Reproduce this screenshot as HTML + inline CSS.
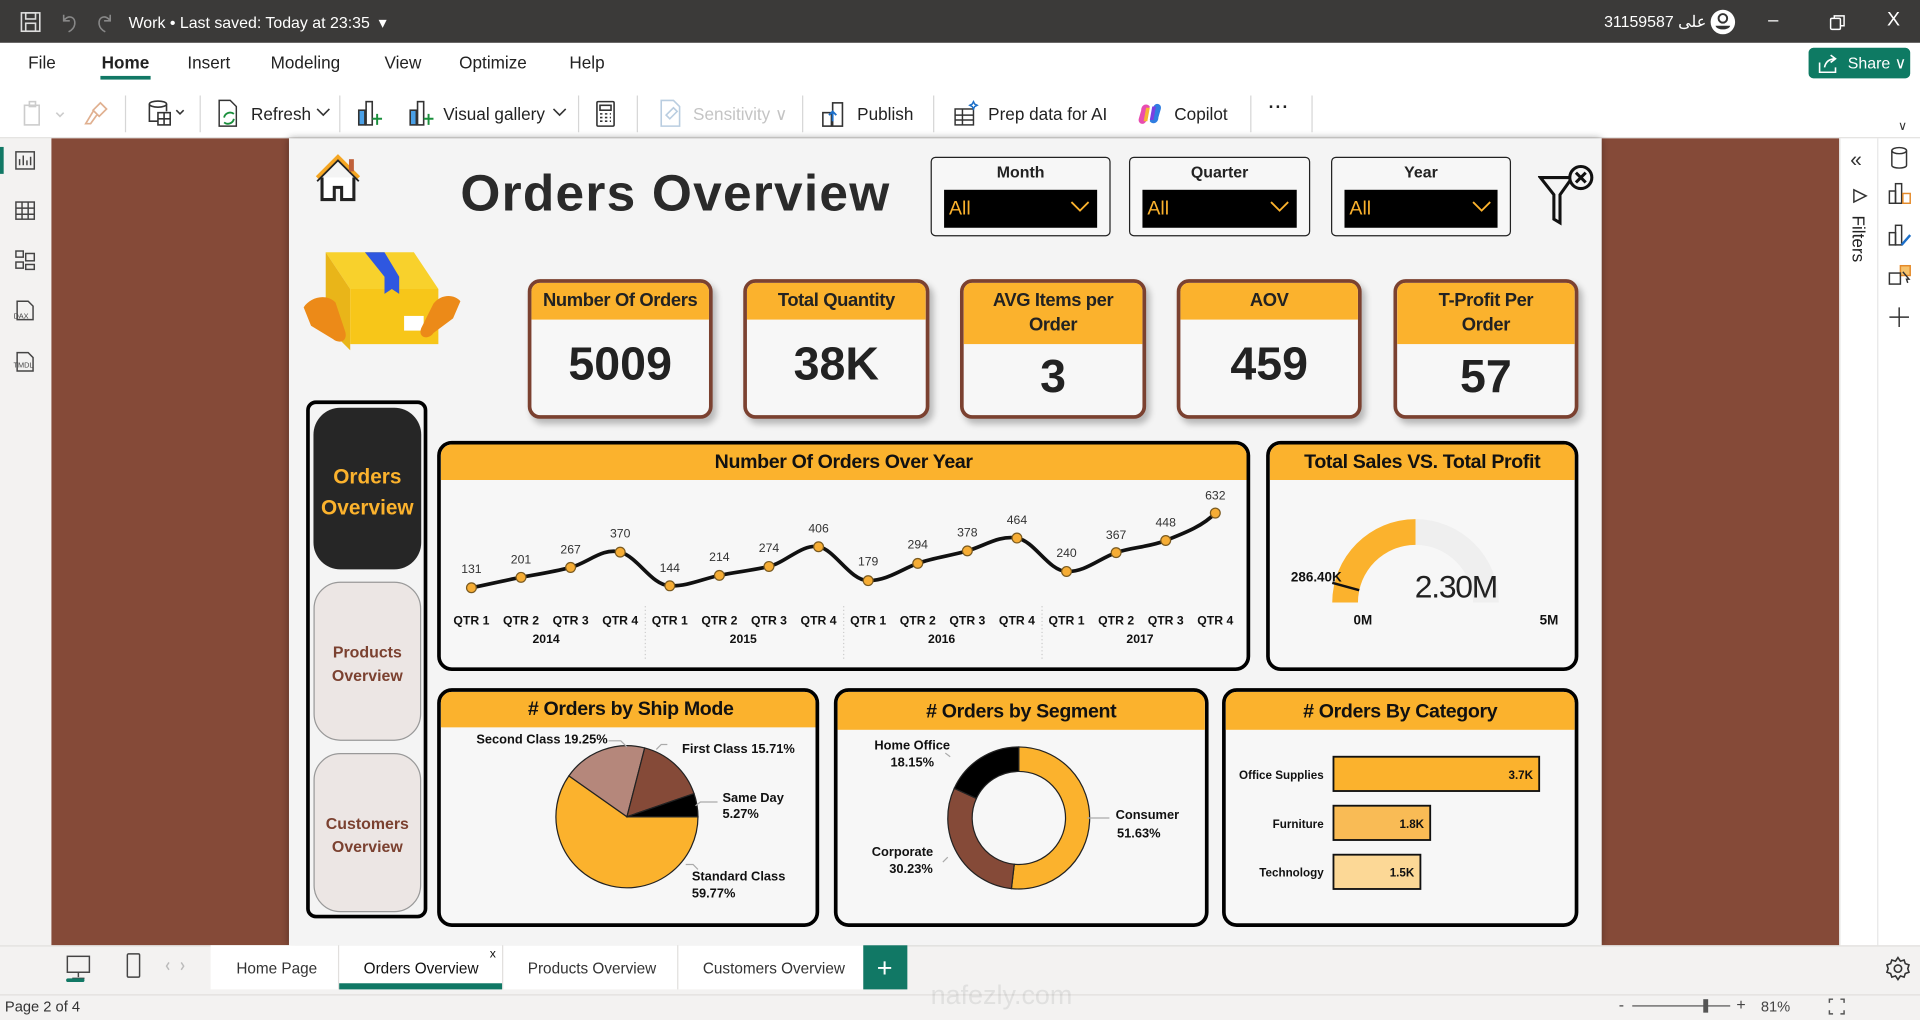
<!DOCTYPE html>
<html><head><meta charset="utf-8"><style>
*{margin:0;padding:0;box-sizing:border-box}
html,body{width:1920px;height:1020px;overflow:hidden;background:#fff}
#w{position:absolute;left:0;top:0;width:1568px;height:833px;transform:scale(1.2244898);transform-origin:0 0;font-family:"Liberation Sans",sans-serif;background:#f3f2f1}
.a{position:absolute}
.t{position:absolute;white-space:nowrap}
.n{font-family:"Liberation Sans",sans-serif;font-weight:bold}
.kpi{position:absolute;border:3px solid #7b4130;border-radius:10px;background:#f7f7f7;overflow:hidden;box-shadow:3px 4px 5px rgba(0,0,0,.25)}
.kh{background:#fbb22d;color:#222;text-align:center;font-weight:bold;font-size:15px;line-height:20px;padding:5px 0;white-space:nowrap;letter-spacing:-0.3px}
.kv{text-align:center;font-weight:bold;font-size:38px;color:#222}
.card{position:absolute;border:3px solid #000;border-radius:12px;background:#f7f7f7;overflow:hidden}
.ch{background:#fbb22d;height:29px;text-align:center;font-weight:bold;font-size:16px;line-height:29px;color:#111;letter-spacing:-0.3px}
.sl{position:absolute;border:1.5px solid #222;border-radius:4px;background:#f7f7f7}
.sl .lb{text-align:center;font-size:13px;color:#222;margin-top:4px;font-weight:bold}
.sl .dd{position:absolute;left:10px;right:10px;top:26px;height:31px;background:#000;color:#fbb22d;font-size:16px;padding:7px 0 0 4px}
.tab{position:absolute;font-size:14px;color:#222;top:51px;transform:translateY(-50%)}
.sep{position:absolute;top:78px;width:1px;height:30px;background:#d6d6d6}
.tb{position:absolute;top:85px;font-size:14px;color:#222}
</style></head><body><div id="w">
<div class="a" style="left:0;top:0;width:1568px;height:35px;background:#3b3a39"></div>
<svg class="a" style="left:16px;top:9px" width="18" height="18" viewBox="0 0 18 18" fill="none" stroke="#ddd" stroke-width="1.3"><rect x="1.5" y="1.5" width="15" height="15"/><rect x="5" y="1.5" width="8" height="5"/><rect x="5" y="10" width="8" height="6.5"/></svg>
<svg class="a" style="left:48px;top:9px" width="16" height="18" fill="none" stroke="#888" stroke-width="1.3"><path d="M4 3v5h5M4 8c3-5 10-4 9 3-0.5 3-3 5-5 6"/></svg>
<svg class="a" style="left:78px;top:9px" width="16" height="18" fill="none" stroke="#888" stroke-width="1.3"><path d="M12 3v5H7M12 8C9 3 2 4 3 11c0.5 3 3 5 5 6"/></svg>
<div class="t" style="left:105px;top:11px;color:#fff;font-size:13px">Work • Last saved: Today at 23:35 &nbsp;▾</div>
<div class="t" style="left:1310px;top:10px;color:#fff;font-size:13px;font-family:'Liberation Sans','Noto Sans CJK SC',sans-serif">31159587 على</div>
<svg class="a" style="left:1396px;top:7px" width="22" height="22"><circle cx="11" cy="11" r="10" fill="#fff"/><circle cx="11" cy="8" r="3.5" fill="none" stroke="#333" stroke-width="1.6"/><path d="M5 14h12c-1 4-11 4-12 0z" fill="#333"/></svg>
<div class="t" style="left:1444px;top:8px;color:#fff;font-size:15px">–</div>
<svg class="a" style="left:1494px;top:12px" width="13" height="13" fill="none" stroke="#fff" stroke-width="1.2"><rect x="1" y="3" width="8" height="9" rx="1"/><path d="M4 3V1h8v8h-3"/></svg>
<div class="t" style="left:1541px;top:8px;color:#fff;font-size:16px">X</div>
<div class="a" style="left:0;top:35px;width:1568px;height:78px;background:#fff"></div>
<div class="tab" style="left:23px">File</div>
<div class="tab" style="left:83px;font-weight:bold">Home</div>
<div class="a" style="left:82px;top:62px;width:41px;height:3px;background:#117865"></div>
<div class="tab" style="left:153px">Insert</div>
<div class="tab" style="left:221px">Modeling</div>
<div class="tab" style="left:314px">View</div>
<div class="tab" style="left:375px">Optimize</div>
<div class="tab" style="left:465px">Help</div>
<div class="a" style="left:1477px;top:39px;width:83px;height:25px;background:#0e7a63;border-radius:4px;color:#fff;font-size:13px;padding:5px 0 0 32px">Share ∨</div>
<svg class="a" style="left:1484px;top:43px" width="18" height="17" fill="none" stroke="#fff" stroke-width="1.3"><path d="M2 8v8h13v-4M6 12c1-5 4-7 9-7M11 2l4 3-4 3"/></svg>
<svg class="a" style="left:18px;top:82px" width="40" height="22" fill="none" stroke="#ccc" stroke-width="1.3"><rect x="2" y="4" width="12" height="16"/><rect x="6" y="1" width="5" height="4"/><path d="M28 10l3 3 3-3"/></svg>
<svg class="a" style="left:68px;top:82px" width="22" height="22" fill="none" stroke="#e0b090" stroke-width="1.4"><path d="M14 2l5 5-6 6-5-5zM8 9l-6 10h4l5-7"/></svg>
<div class="sep" style="left:102px"></div>
<svg class="a" style="left:120px;top:81px" width="36" height="24" fill="none" stroke="#333" stroke-width="1.3"><ellipse cx="9" cy="4" rx="7" ry="2.5"/><path d="M2 4v14h7M16 4v6"/><rect x="9" y="11" width="10" height="10"/><path d="M9 16h10M14 11v10M24 9l3 3 3-3"/></svg>
<div class="sep" style="left:163px"></div>
<svg class="a" style="left:177px;top:81px" width="20" height="24" fill="none" stroke="#333" stroke-width="1.2"><path d="M2 1h9l5 5v16H2z"/><path d="M6 15a5 5 0 0 1 8-3M14 16a5 5 0 0 1-8 3" stroke="#1a8f3c" stroke-width="1.5"/></svg>
<div class="tb" style="left:205px">Refresh</div>
<svg class="a" style="left:258px;top:88px" width="12" height="8" fill="none" stroke="#333" stroke-width="1.3"><path d="M1 1l5 5 5-5"/></svg>
<div class="sep" style="left:277px"></div>
<svg class="a" style="left:291px;top:81px" width="22" height="24" fill="none" stroke="#333" stroke-width="1.3"><rect x="2" y="9" width="5" height="12" fill="#4aa0e6"/><rect x="8" y="2" width="5" height="19"/><path d="M13 16h8M17 12v9" stroke="#1a8f3c" stroke-width="1.6"/></svg>
<svg class="a" style="left:333px;top:81px" width="22" height="24" fill="none" stroke="#333" stroke-width="1.3"><rect x="2" y="9" width="5" height="12" fill="#4aa0e6"/><rect x="8" y="2" width="5" height="19"/><path d="M13 16h8M17 12v9" stroke="#1a8f3c" stroke-width="1.6"/></svg>
<div class="tb" style="left:362px">Visual gallery</div>
<svg class="a" style="left:451px;top:88px" width="12" height="8" fill="none" stroke="#333" stroke-width="1.3"><path d="M1 1l5 5 5-5"/></svg>
<div class="sep" style="left:472px"></div>
<svg class="a" style="left:486px;top:82px" width="17" height="22" fill="none" stroke="#333" stroke-width="1.3"><rect x="1.5" y="1" width="14" height="20" rx="1"/><rect x="4" y="4" width="9" height="4"/><path d="M4 11h2M8 11h2M12 11h1M4 14h2M8 14h2M12 14h1M4 17h2M8 17h2M12 17h1"/></svg>
<div class="sep" style="left:520px"></div>
<svg class="a" style="left:538px;top:81px" width="20" height="24" fill="none" stroke="#b9cde0" stroke-width="1.3"><path d="M2 1h10l5 5v16H2z"/><path d="M6 13l6-6 3 3-6 6z"/></svg>
<div class="tb" style="left:566px;color:#c4c4c4">Sensitivity ∨</div>
<div class="sep" style="left:655px"></div>
<svg class="a" style="left:670px;top:81px" width="22" height="24" fill="none" stroke="#333" stroke-width="1.3"><rect x="2" y="11" width="7" height="11"/><rect x="10" y="3" width="8" height="19"/><path d="M10 18V10M7 13l3-3 3 3" stroke="#1c6fc9" stroke-width="1.5"/></svg>
<div class="tb" style="left:700px">Publish</div>
<div class="sep" style="left:762px"></div>
<svg class="a" style="left:778px;top:81px" width="22" height="24" fill="none" stroke="#333" stroke-width="1.2"><rect x="2" y="8" width="15" height="13"/><path d="M2 13h15M2 17h15M8 8v13"/><path d="M17 2l1 2 2 1-2 1-1 2-1-2-2-1 2-1z" stroke="#1c6fc9"/></svg>
<div class="tb" style="left:807px">Prep data for AI</div>
<svg class="a" style="left:928px;top:82px" width="22" height="22"><path d="M4 8c0-5 5-6 7-3l-3 12c-2 4-7 2-6-2z" fill="#e84cb0"/><path d="M18 14c0 5-5 6-7 3l3-12c2-4 7-2 6 2z" fill="#2f7de1"/><path d="M8 6l3 0-2 11-3 0z" fill="#f6b533"/><path d="M14 16l-3 0 2-11 3 0z" fill="#7b3fe0"/></svg>
<div class="tb" style="left:959px">Copilot</div>
<div class="sep" style="left:1021px"></div>
<div class="tb" style="left:1036px;top:79px;font-weight:bold;letter-spacing:1px">···</div>
<div class="sep" style="left:1071px"></div>
<div class="t" style="left:1550px;top:98px;font-size:10px;color:#333">∨</div>
<div class="a" style="left:0;top:112px;width:1568px;height:1px;background:#e1dfdd"></div>
<div class="a" style="left:0;top:113px;width:42px;height:659px;background:#f3f2f1"></div>
<div class="a" style="left:0;top:120px;width:3px;height:22px;background:#117865"></div>
<svg class="a" style="left:11px;top:122px" width="20" height="200" fill="none" stroke="#444" stroke-width="1.2">
<rect x="2" y="2" width="15" height="14"/><path d="M5 13V8M8 13V5M11 13V9M14 13V6"/>
<rect x="2" y="43" width="15" height="14"/><path d="M2 48h15M2 53h15M7 43v14M12 43v14"/>
<rect x="2" y="83" width="6" height="5"/><rect x="10" y="85" width="7" height="6"/><rect x="2" y="92" width="6" height="5"/><rect x="10" y="94" width="7" height="4"/>
<path d="M3 124h9l4 4v11H3z"/><path d="M3 166h9l4 4v11H3z"/>
</svg>
<div class="t" style="left:11px;top:256px;font-size:6px;color:#444">DAX</div>
<div class="t" style="left:11px;top:296px;font-size:6px;color:#444">TMDL</div>
<div class="a" style="left:42px;top:113px;width:1460px;height:659px;background:#ebebeb"></div>
<div class="a" style="left:42px;top:113px;width:194px;height:659px;background:#854a38"></div>
<div class="a" style="left:1308px;top:113px;width:194px;height:659px;background:#854a38"></div>
<div class="a" style="left:236px;top:113px;width:1072px;height:659px;background:#f4f4f4;box-shadow:0 0 6px rgba(0,0,0,.4)"></div>
<div class="a" style="left:1502px;top:113px;width:66px;height:659px;background:#fff;border-left:1px solid #e1dfdd"></div>
<div class="a" style="left:1533px;top:113px;width:1px;height:659px;background:#e6e6e6"></div>
<div class="t" style="left:1511px;top:121px;font-size:17px;color:#333">«</div>
<svg class="a" style="left:1512px;top:153px" width="14" height="14" fill="none" stroke="#333" stroke-width="1.2"><path d="M2 2l10 5-10 5z"/></svg>
<div class="t" style="font-size:14px;color:#222;transform:rotate(90deg);transform-origin:0 0;left:1526px;top:176px">Filters</div>
<svg class="a" style="left:1540px;top:118px" width="24" height="160" fill="none" stroke="#333" stroke-width="1.2">
<ellipse cx="11" cy="5" rx="6" ry="2.5"/><path d="M5 5v12c0 3 12 3 12 0V5"/>
<rect x="3" y="38" width="5" height="10"/><rect x="8" y="32" width="5" height="16"/><rect x="14" y="40" width="6" height="8" stroke="#e48a2a"/>
<rect x="3" y="72" width="5" height="10"/><rect x="8" y="66" width="5" height="16"/><path d="M13 82l7-8" stroke="#1c6fc9" stroke-width="2"/>
<rect x="12" y="99" width="8" height="8" fill="#f6c26b" stroke="#e48a2a"/><rect x="3" y="105" width="9" height="9"/><path d="M14 104l5 6-2 0 1 3"/>
<path d="M11 133v16M3 141h16"/>
</svg>
<svg class="a" style="left:254px;top:123px" width="44" height="44" fill="none"><path d="M5 22L22 5l17 17" stroke="#f5a623" stroke-width="3"/><path d="M5 22L22 5l17 17" stroke="#222" stroke-width="1.5" transform="translate(0,3)"/><path d="M9 22v18h10V30h6v10h10V22" stroke="#222" stroke-width="2.5" fill="#fff"/><rect x="31" y="7" width="4" height="10" fill="#c0603a"/></svg>
<div class="t" style="left:376px;top:134px;font-size:42px;font-weight:bold;color:#2a2a2a;letter-spacing:1px">Orders Overview</div>
<div class="sl" style="left:760px;top:128px;width:147px;height:65px"><div class="lb">Month</div><div class="dd">All</div></div>
<div class="sl" style="left:922px;top:128px;width:148px;height:65px"><div class="lb">Quarter</div><div class="dd">All</div></div>
<div class="sl" style="left:1087px;top:128px;width:147px;height:65px"><div class="lb">Year</div><div class="dd">All</div></div>
<svg class="a" style="left:760px;top:160px" width="480" height="20" fill="none" stroke="#fbb22d" stroke-width="1.5"><path d="M115 5l7 7 7-7M278 5l7 7 7-7M443 5l7 7 7-7"/></svg>
<svg class="a" style="left:1256px;top:133px" width="50" height="52" fill="none" stroke="#111" stroke-width="2.5"><path d="M2 12h26l-10 14v23l-5-3V26z"/><circle cx="35" cy="12" r="9" fill="#f4f4f4"/><path d="M31 8l8 8M39 8l-8 8" stroke-width="2.5"/></svg>
<svg class="a" style="left:246px;top:196px" width="134" height="100">
<path d="M20 10h72l20 30H40z" fill="#f8d12c"/><path d="M20 10l20 30v50L20 70z" fill="#e9b519"/><path d="M40 40h72v45H40z" fill="#f7c619"/>
<path d="M52 10h16l12 20v14l-6-4-6 4V30z" fill="#2f57e0"/><rect x="84" y="62" width="16" height="12" fill="#fff"/>
<path d="M2 55c5-8 18-12 26-4l8 24c2 8-5 10-10 6L8 70z" fill="#ec8a18"/><path d="M130 50c-5-6-16-6-22 2l-10 20c-3 8 6 10 10 4l16-12z" fill="#ec8a18"/>
</svg>
<div class="kpi" style="left:431px;top:228px;width:151px;height:114px"><div class="kh">Number Of Orders</div><div class="kv" style="margin-top:16px">5009</div></div>
<div class="kpi" style="left:607px;top:228px;width:152px;height:114px"><div class="kh">Total Quantity</div><div class="kv" style="margin-top:16px">38K</div></div>
<div class="kpi" style="left:784px;top:228px;width:152px;height:114px"><div class="kh">AVG Items per<br>Order</div><div class="kv" style="margin-top:6px">3</div></div>
<div class="kpi" style="left:961px;top:228px;width:151px;height:114px"><div class="kh">AOV</div><div class="kv" style="margin-top:16px">459</div></div>
<div class="kpi" style="left:1138px;top:228px;width:151px;height:114px"><div class="kh">T-Profit Per<br>Order</div><div class="kv" style="margin-top:6px">57</div></div>
<div class="a" style="left:250px;top:327px;width:99px;height:423px;border:3px solid #000;border-radius:8px;background:#f4f4f4"></div>
<div class="a n" style="left:256px;top:333px;width:88px;height:132px;background:#262626;border-radius:22px;color:#fbb22d;font-size:17px;text-align:center;padding-top:44px;line-height:25px">Orders<br>Overview</div>
<div class="a n" style="left:256px;top:475px;width:88px;height:130px;background:#ece6e4;border:1px solid #999;border-radius:22px;color:#7b4130;font-size:13px;text-align:center;padding-top:47px;line-height:19px">Products<br>Overview</div>
<div class="a n" style="left:256px;top:615px;width:88px;height:130px;background:#ece6e4;border:1px solid #999;border-radius:22px;color:#7b4130;font-size:13px;text-align:center;padding-top:47px;line-height:19px">Customers<br>Overview</div>
<div class="card" style="left:357px;top:360px;width:664px;height:188px"><div class="ch">Number Of Orders Over Year</div></div>
<div class="card" style="left:1034px;top:360px;width:255px;height:188px"><div class="ch">Total Sales VS. Total Profit</div></div>
<div class="card" style="left:357px;top:562px;width:312px;height:195px"><div class="ch">&nbsp;# Orders by Ship Mode</div></div>
<div class="card" style="left:681px;top:562px;width:306px;height:195px"><div class="ch" style="height:31px;line-height:33px"># Orders by Segment</div></div>
<div class="card" style="left:998px;top:562px;width:291px;height:195px"><div class="ch" style="height:31px;line-height:33px"># Orders By Category</div></div>
<svg class="a" style="left:0;top:0" width="1568" height="833" font-family="Liberation Sans, sans-serif" font-weight="bold">
<g stroke="#ccc" stroke-dasharray="1 2"><path d="M527 495v45M689 495v45M851 495v45"/></g>
<path fill="none" stroke="#111" stroke-width="3" stroke-linejoin="round" d="M385 480C400 477 412 474 425.5 471.5S452 467 466 463.4S492 447 506.5 450.9S532 478 547 478.4S573 473 587.5 469.9S614 466 628 462.6S655 444 668.5 446.5S694 474 709 474.2S736 465 749.5 460.1S776 454 790 449.9S816 437 830.5 439.4S856 466 871 466.7S898 456 911.5 451.3S938 447 952 441.4S982 430 992.5 419"/>
<g fill="#f6ad35" stroke="#7a5a20" stroke-width="1">
<circle cx="385" cy="480" r="4"/><circle cx="425.5" cy="471.5" r="4"/><circle cx="466" cy="463.4" r="4"/><circle cx="506.5" cy="450.9" r="4"/><circle cx="547" cy="478.4" r="4"/><circle cx="587.5" cy="469.9" r="4"/><circle cx="628" cy="462.6" r="4"/><circle cx="668.5" cy="446.5" r="4"/><circle cx="709" cy="474.2" r="4"/><circle cx="749.5" cy="460.1" r="4"/><circle cx="790" cy="449.9" r="4"/><circle cx="830.5" cy="439.4" r="4"/><circle cx="871" cy="466.7" r="4"/><circle cx="911.5" cy="451.3" r="4"/><circle cx="952" cy="441.4" r="4"/><circle cx="992.5" cy="419" r="4"/></g>
<g font-size="10" fill="#333" text-anchor="middle" font-weight="normal">
<text x="385" y="468">131</text><text x="425.5" y="460">201</text><text x="466" y="452">267</text><text x="506.5" y="439">370</text><text x="547" y="467">144</text><text x="587.5" y="458">214</text><text x="628" y="451">274</text><text x="668.5" y="435">406</text><text x="709" y="462">179</text><text x="749.5" y="448">294</text><text x="790" y="438">378</text><text x="830.5" y="428">464</text><text x="871" y="455">240</text><text x="911.5" y="440">367</text><text x="952" y="430">448</text><text x="992.5" y="408">632</text></g>
<g font-size="10" fill="#111" text-anchor="middle">
<text x="385" y="510">QTR 1</text><text x="425.5" y="510">QTR 2</text><text x="466" y="510">QTR 3</text><text x="506.5" y="510">QTR 4</text><text x="547" y="510">QTR 1</text><text x="587.5" y="510">QTR 2</text><text x="628" y="510">QTR 3</text><text x="668.5" y="510">QTR 4</text><text x="709" y="510">QTR 1</text><text x="749.5" y="510">QTR 2</text><text x="790" y="510">QTR 3</text><text x="830.5" y="510">QTR 4</text><text x="871" y="510">QTR 1</text><text x="911.5" y="510">QTR 2</text><text x="952" y="510">QTR 3</text><text x="992.5" y="510">QTR 4</text>
<text x="446" y="525">2014</text><text x="607" y="525">2015</text><text x="769" y="525">2016</text><text x="931" y="525">2017</text></g>
<path d="M1156 424 A68 68 0 0 1 1224 492 L1203 492 A47 47 0 0 0 1156 445 Z" fill="#efefef"/>
<path d="M1088 492 A68 68 0 0 1 1156 424 L1156 445 A47 47 0 0 0 1109 492 Z" fill="#fbb22d"/>
<path d="M1088 476 L1110 482" stroke="#111" stroke-width="2"/>
<text x="1189" y="488" font-size="26" font-weight="normal" fill="#222" text-anchor="middle" letter-spacing="-1">2.30M</text>
<text x="1075" y="475" font-size="11" fill="#111" text-anchor="middle">286.40K</text>
<text x="1113" y="510" font-size="11" fill="#111" text-anchor="middle">0M</text>
<text x="1265" y="510" font-size="11" fill="#111" text-anchor="middle">5M</text>
<g stroke="#222" stroke-width="1">
<path d="M512 667 L570 667 A58 58 0 1 1 464.6 633.6 Z" fill="#fbb22d"/>
<path d="M512 667 L464.6 633.6 A58 58 0 0 1 526.5 610.8 Z" fill="#b5877b"/>
<path d="M512 667 L526.5 610.8 A58 58 0 0 1 566.8 648.1 Z" fill="#854a38"/>
<path d="M512 667 L566.8 648.1 A58 58 0 0 1 570 667 Z" fill="#000"/></g>
<g stroke="#aaa" fill="none"><path d="M497 605h10l5 5M536 612l4-4h5M568 658l4-3h14M560 706h6l4 4"/></g>
<g font-size="10.5" fill="#111"><text x="389" y="607">Second Class 19.25%</text><text x="557" y="615">First Class 15.71%</text><text x="590" y="655">Same Day</text><text x="590" y="668">5.27%</text><text x="565" y="719">Standard Class</text><text x="565" y="733">59.77%</text></g>
<g stroke="#222" stroke-width="1">
<path d="M832 610 A58 58 0 1 1 826 725.7 L828.3 705.8 A38 38 0 1 0 832 630 Z" fill="#fbb22d"/>
<path d="M826 725.7 A58 58 0 0 1 779.3 643.8 L797.4 652.1 A38 38 0 0 0 828.3 705.8 Z" fill="#854a38"/>
<path d="M779.3 643.8 A58 58 0 0 1 832 610 L832 630 A38 38 0 0 0 797.4 652.1 Z" fill="#000"/></g>
<g stroke="#aaa" fill="none"><path d="M772 615l4 3M888 668h18M774 700l-4 4"/></g>
<g font-size="10.5" fill="#111" text-anchor="middle"><text x="745" y="612">Home Office</text><text x="745" y="626">18.15%</text><text x="937" y="669">Consumer</text><text x="930" y="684">51.63%</text><text x="737" y="699">Corporate</text><text x="744" y="713">30.23%</text></g>
<g stroke="#111" stroke-width="1.5"><rect x="1089" y="618" width="168" height="28" fill="#fbb22d"/><rect x="1089" y="658" width="79" height="28" fill="#f9bb55"/><rect x="1089" y="698" width="71" height="28" fill="#fcd896"/></g>
<g font-size="9.5" fill="#111" text-anchor="end"><text x="1081" y="636">Office Supplies</text><text x="1081" y="676">Furniture</text><text x="1081" y="716">Technology</text><text x="1252" y="636">3.7K</text><text x="1163" y="676">1.8K</text><text x="1155" y="716">1.5K</text></g>
</svg>
<div class="a" style="left:0;top:772px;width:1568px;height:40px;background:#f3f2f1;border-top:1px solid #e1dfdd"></div>
<svg class="a" style="left:50px;top:778px" width="120" height="30" fill="none" stroke="#444" stroke-width="1.2"><rect x="5" y="3" width="18" height="13"/><path d="M14 16v4M9 21h10"/><rect x="54" y="1" width="10" height="19" rx="1"/><path d="M88 8l-2 3 2 3M98 8l2 3-2 3" stroke="#bbb"/></svg>
<div class="a" style="left:54px;top:799px;width:15px;height:3px;background:#117865;border-radius:2px"></div>
<div class="a" style="left:172px;top:772px;width:533px;height:36px;background:#fff"></div>
<div class="a" style="left:276px;top:772px;width:1px;height:36px;background:#e1dfdd"></div>
<div class="a" style="left:410px;top:772px;width:1px;height:36px;background:#e1dfdd"></div>
<div class="a" style="left:553px;top:772px;width:1px;height:36px;background:#e1dfdd"></div>
<div class="t" style="left:193px;top:784px;font-size:12.5px;color:#333">Home Page</div>
<div class="t" style="left:297px;top:784px;font-size:12.5px;color:#111">Orders Overview</div>
<div class="t" style="left:400px;top:774px;font-size:10px;color:#111">x</div>
<div class="a" style="left:277px;top:803px;width:133px;height:5px;background:#117865"></div>
<div class="t" style="left:431px;top:784px;font-size:12.5px;color:#333">Products Overview</div>
<div class="t" style="left:574px;top:784px;font-size:12.5px;color:#333">Customers Overview</div>
<div class="a" style="left:705px;top:772px;width:36px;height:36px;background:#117865"></div>
<div class="t" style="left:716px;top:778px;font-size:22px;color:#fff">+</div>
<svg class="a" style="left:1540px;top:780px" width="20" height="22" fill="none" stroke="#333" stroke-width="1.3"><circle cx="10" cy="11" r="3"/><path d="M10 2l2 3 3-1 1 3 3 1-1 3 1 3-3 1-1 3-3-1-2 3-2-3-3 1-1-3-3-1 1-3-1-3 3-1 1-3 3 1z"/></svg>
<div class="a" style="left:0;top:812px;width:1568px;height:21px;background:#f3f2f1;border-top:1px solid #e1dfdd"></div>
<div class="t" style="left:4px;top:815px;font-size:12px;color:#333">Page 2 of 4</div>
<div class="t" style="left:1322px;top:813px;font-size:13px;color:#444">-</div>
<div class="a" style="left:1333px;top:821px;width:80px;height:1px;background:#555"></div>
<div class="a" style="left:1391px;top:816px;width:4px;height:11px;background:#555"></div>
<div class="t" style="left:1418px;top:813px;font-size:13px;color:#444">+</div>
<div class="t" style="left:1438px;top:815px;font-size:12px;color:#444">81%</div>
<svg class="a" style="left:1493px;top:815px" width="14" height="14" fill="none" stroke="#555" stroke-width="1.2"><path d="M1 4V1h3M10 1h3v3M13 10v3h-3M4 13H1v-3"/></svg>
<div class="t" style="left:760px;top:800px;font-size:22px;color:rgba(120,120,120,.15)">nafezly.com</div>
</div></body></html>
